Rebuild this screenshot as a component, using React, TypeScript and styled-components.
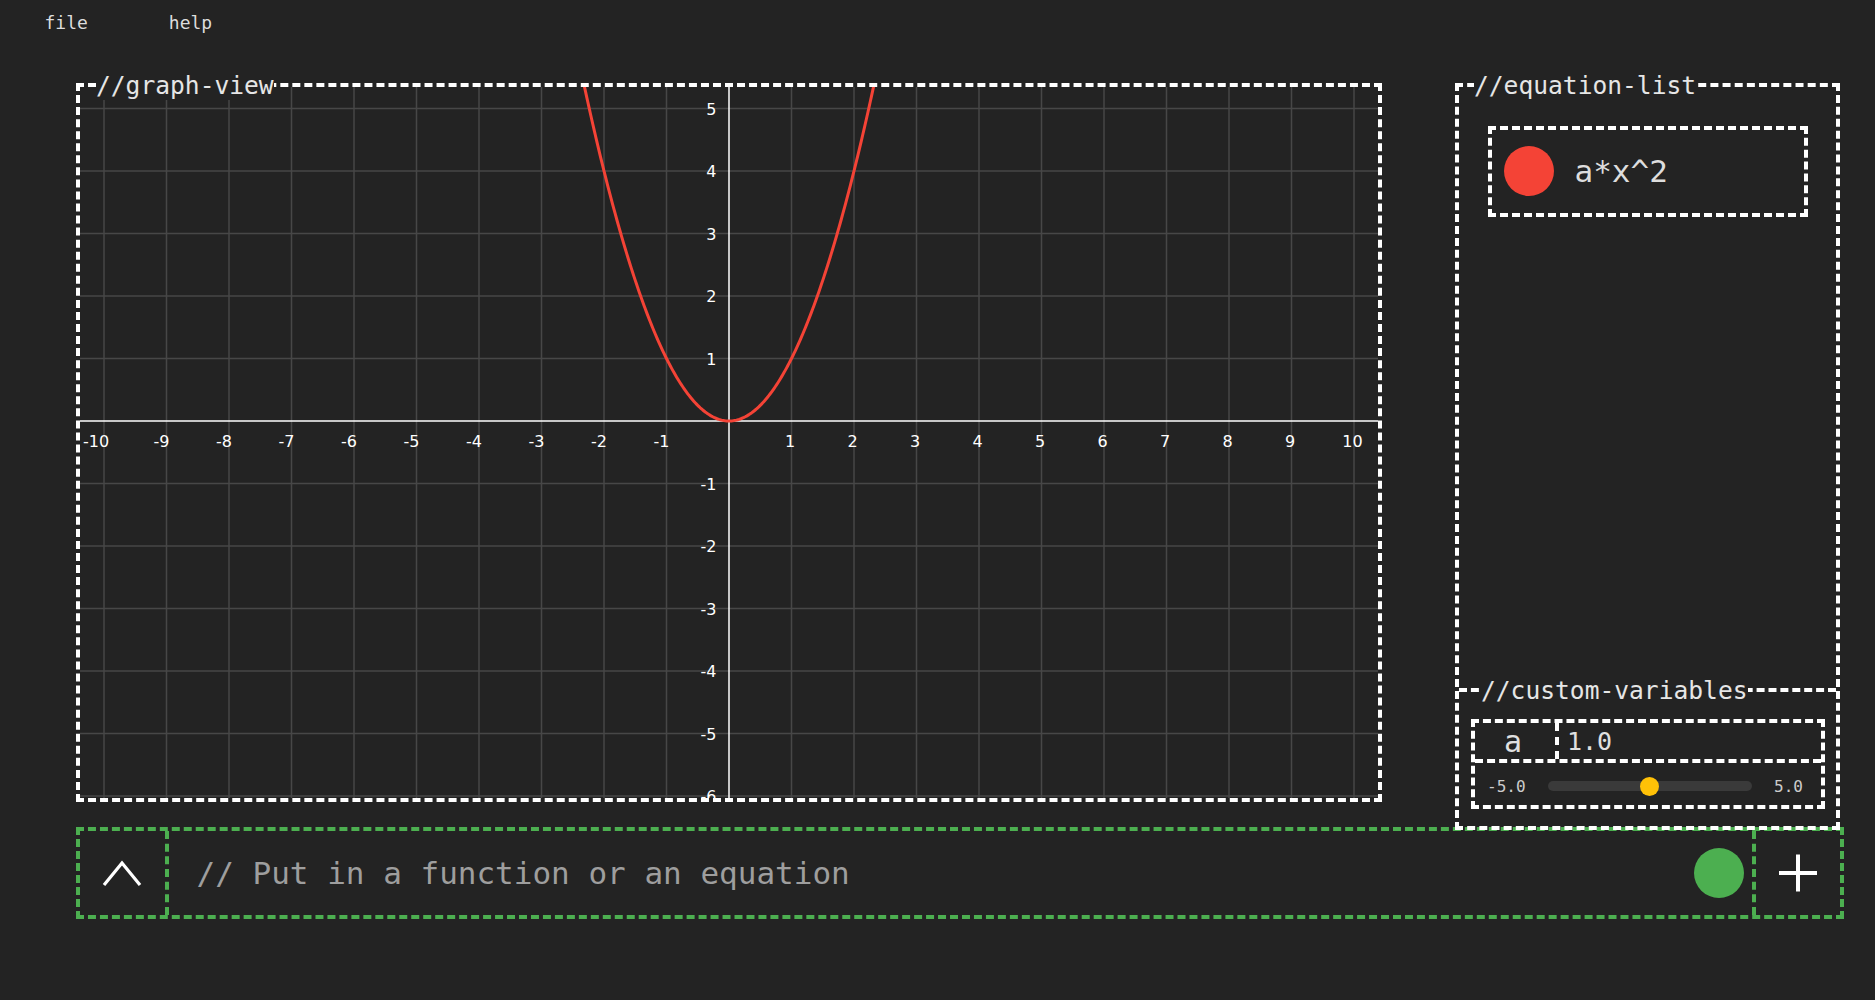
import React from "react";
import styled, { createGlobalStyle } from "styled-components";

const BG = "#232323";
const MONO = `"DejaVu Sans Mono", "Liberation Mono", monospace`;
const GREEN = "#4caf50";
const BW = 4;

const GlobalStyle = createGlobalStyle`
  html, body { margin: 0; padding: 0; background: ${BG}; }
  body { font-family: ${MONO}; color: #e0e0e0; }
  * { box-sizing: border-box; }
`;

const Page = styled.div`
  width: 1875px;
  height: 1000px;
  background: ${BG};
  overflow: hidden;
`;

const MenuBar = styled.nav`
  display: flex;
  gap: 81px;
  height: 44px;
  padding: 12px 0 0 44.5px;
  font-size: 18px;
  line-height: 21px;
  color: #dddddd;
`;

const MenuItem = styled.span`
  cursor: default;
`;

const Workspace = styled.main`
  display: grid;
  grid-template-columns: 1306px 385px;
  column-gap: 73px;
  align-items: start;
  margin: 39px 0 0 76px;
`;

const Frame = styled.section`
  position: relative;
  border: ${BW}px dashed #ffffff;
`;

const GraphFrame = styled(Frame)`
  height: 719px;
`;

const SidePanel = styled(Frame)`
  height: 747px;
  display: flex;
  flex-direction: column;
  z-index: 1;
`;

const FrameTitle = styled.h2<{ $left: number }>`
  position: absolute;
  top: -16px;
  left: ${(p) => p.$left}px;
  margin: 0;
  font-size: 24.6px;
  line-height: 29px;
  font-weight: normal;
  background: ${BG};
  color: #e6e6e6;
  white-space: nowrap;
`;

const GraphCanvas = styled.svg`
  display: block;
`;

const EquationList = styled.div`
  flex: 1;
  padding: 38.7px 28px 0 29px;
`;

const EquationItem = styled.div`
  height: 91px;
  border: ${BW}px dashed #ffffff;
  display: flex;
  align-items: center;
  gap: 20.5px;
  padding-left: 12px;
  font-size: 31px;
  color: #dddddd;
`;

const Dot = styled.span<{ $color: string; $size: number }>`
  width: ${(p) => p.$size}px;
  height: ${(p) => p.$size}px;
  border-radius: 50%;
  background: ${(p) => p.$color};
  flex-shrink: 0;
`;

const VarSection = styled.div`
  position: relative;
  height: 138px;
  border-top: ${BW}px dashed #ffffff;
  padding: 27px 11px 0 12px;
`;

const VarBox = styled.div`
  border: ${BW}px dashed #ffffff;
`;

const VarRow = styled.div`
  display: flex;
  height: 40px;
  border-bottom: ${BW}px dashed #ffffff;
`;

const VarName = styled.div`
  width: 84px;
  border-right: ${BW}px dashed #ffffff;
  display: flex;
  align-items: center;
  justify-content: center;
  padding-right: 4px;
  font-size: 30px;
  color: #e0e0e0;
`;

const VarValue = styled.div`
  flex: 1;
  display: flex;
  align-items: center;
  padding-left: 8px;
  font-size: 25px;
  color: #e0e0e0;
`;

const SliderRow = styled.div`
  height: 42px;
  display: flex;
  align-items: center;
  gap: 22px;
  padding: 4px 18px 0 12px;
  font-size: 16px;
  color: #cccccc;
`;

const Track = styled.div`
  position: relative;
  flex: 1;
  height: 10px;
  border-radius: 5px;
  background: #3a3a3a;
`;

const Thumb = styled.span`
  position: absolute;
  top: 50%;
  width: 19px;
  height: 19px;
  margin: -9.5px 0 0 -9.5px;
  border-radius: 50%;
  background: #ffc107;
`;

const InputBar = styled.div`
  display: flex;
  width: 1768px;
  height: 92px;
  margin: -3px 0 0 75.5px;
  border: ${BW}px dashed ${GREEN};
`;

const IconCell = styled.button<{ $side: "left" | "right"; $width: number }>`
  width: ${(p) => p.$width}px;
  flex-shrink: 0;
  display: flex;
  align-items: center;
  justify-content: center;
  background: transparent;
  border: none;
  ${(p) =>
    p.$side === "left"
      ? `border-right: ${BW}px dashed ${GREEN};`
      : `border-left: ${BW}px dashed ${GREEN};`}
  padding: 0;
  cursor: pointer;
`;

const InputCell = styled.div`
  flex: 1;
  display: flex;
  align-items: center;
  padding: 0 8px 0 28px;
`;

const Hint = styled.span`
  flex: 1;
  font-size: 31px;
  color: #9e9e9e;
  white-space: nowrap;
`;

const W = 1298;
const H = 711;
const OX = 649;
const OY = 334;
const U = 62.5;

function Graph() {
  const xs = Array.from({ length: 21 }, (_, i) => i - 10);
  const ys = Array.from({ length: 12 }, (_, i) => 5 - i);
  const pts: string[] = [];
  for (let x = -2.4; x <= 2.4001; x += 0.02) {
    pts.push(`${(OX + x * U).toFixed(2)},${(OY - x * x * U).toFixed(2)}`);
  }
  return (
    <GraphCanvas width={W} height={H} viewBox={`0 0 ${W} ${H}`}>
      {xs.map((k) =>
        k === 0 ? null : (
          <line key={`vx${k}`} x1={OX + k * U} y1={0} x2={OX + k * U} y2={H} stroke="#474747" strokeWidth={1.5} />
        )
      )}
      {ys.map((k) =>
        k === 0 ? null : (
          <line key={`hy${k}`} x1={0} y1={OY - k * U} x2={W} y2={OY - k * U} stroke="#474747" strokeWidth={1.5} />
        )
      )}
      <line x1={0} y1={OY} x2={W} y2={OY} stroke="#ffffff" strokeWidth={1.5} />
      <line x1={OX} y1={0} x2={OX} y2={H} stroke="#ffffff" strokeWidth={1.5} />
      <g fontFamily='"DejaVu Sans", Verdana, sans-serif' fontSize={16} fill="#ffffff">
        {xs.map((k) => {
          if (k === 0) return null;
          if (k === -10) {
            return (
              <text key={`lx${k}`} x={3} y={OY + 26} textAnchor="start">
                {k}
              </text>
            );
          }
          return (
            <text key={`lx${k}`} x={OX + k * U - (k < 0 ? 5 : 1.5)} y={OY + 26} textAnchor="middle">
              {k}
            </text>
          );
        })}
        {ys.map((k) =>
          k === 0 ? null : (
            <text key={`ly${k}`} x={OX - 12.5} y={OY - k * U + 6} textAnchor="end">
              {k}
            </text>
          )
        )}
      </g>
      <polyline points={pts.join(" ")} fill="none" stroke="#f44336" strokeWidth={3} strokeLinejoin="round" />
    </GraphCanvas>
  );
}

function ChevronUp() {
  return (
    <svg width="40" height="27" viewBox="0 0 40 27">
      <polyline points="2,25 20,3 38,25" fill="none" stroke="#ffffff" strokeWidth={3.2} />
    </svg>
  );
}

function PlusIcon() {
  return (
    <svg width="40" height="40" viewBox="0 0 40 40">
      <line x1="1" y1="20" x2="39" y2="20" stroke="#ffffff" strokeWidth={4} />
      <line x1="20" y1="1.5" x2="20" y2="38.5" stroke="#ffffff" strokeWidth={4} />
    </svg>
  );
}

export default function App() {
  const sliderPos = 50;
  return (
    <Page>
      <GlobalStyle />
      <MenuBar>
        <MenuItem>file</MenuItem>
        <MenuItem>help</MenuItem>
      </MenuBar>
      <Workspace>
        <GraphFrame>
          <FrameTitle $left={16}>//graph-view</FrameTitle>
          <Graph />
        </GraphFrame>
        <SidePanel>
          <FrameTitle $left={15}>//equation-list</FrameTitle>
          <EquationList>
            <EquationItem>
              <Dot $color="#f44336" $size={50} />
              <span>a*x^2</span>
            </EquationItem>
          </EquationList>
          <VarSection>
            <FrameTitle $left={22}>//custom-variables</FrameTitle>
            <VarBox>
              <VarRow>
                <VarName>a</VarName>
                <VarValue>1.0</VarValue>
              </VarRow>
              <SliderRow>
                <span>-5.0</span>
                <Track>
                  <Thumb style={{ left: `${sliderPos}%` }} />
                </Track>
                <span>5.0</span>
              </SliderRow>
            </VarBox>
          </VarSection>
        </SidePanel>
      </Workspace>
      <InputBar>
        <IconCell $side="left" $width={89} aria-label="expand">
          <ChevronUp />
        </IconCell>
        <InputCell>
          <Hint>// Put in a function or an equation</Hint>
          <Dot $color={GREEN} $size={50} />
        </InputCell>
        <IconCell $side="right" $width={88} aria-label="add">
          <PlusIcon />
        </IconCell>
      </InputBar>
    </Page>
  );
}
